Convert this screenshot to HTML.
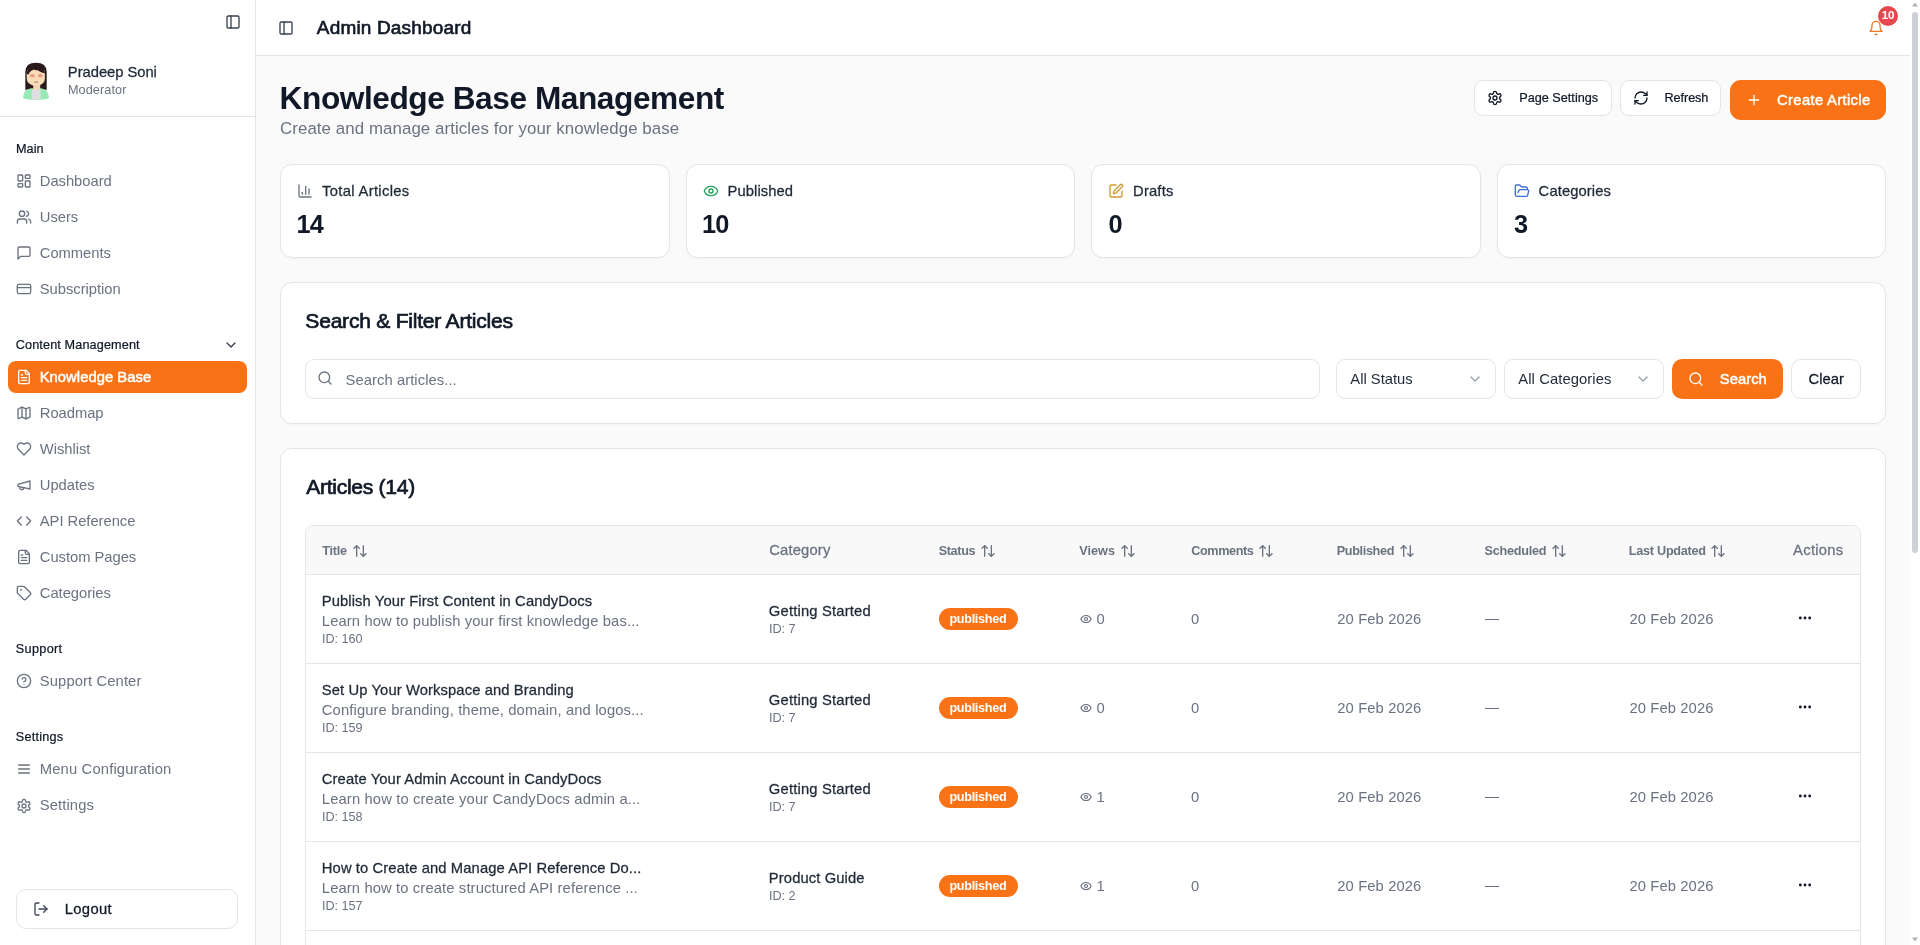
<!DOCTYPE html>
<html><head><meta charset="utf-8"><title>Admin Dashboard</title>
<style>
html,body{margin:0;padding:0;width:1920px;height:945px;overflow:hidden;background:#fafafa;font-family:"Liberation Sans", sans-serif;}
</style></head><body><div style="position:absolute;left:0;top:0;width:1920px;height:945px;will-change:transform">
<div style="position:absolute;left:0px;top:0px;width:1920px;height:945px;background:#fafafa"></div>
<div style="position:absolute;left:0px;top:0px;width:255px;height:945px;background:#ffffff"></div>
<div style="position:absolute;left:255px;top:0px;width:1px;height:945px;background:#e5e5e6"></div>
<div style="position:absolute;left:256px;top:0px;width:1654px;height:55px;background:#ffffff"></div>
<div style="position:absolute;left:256px;top:55px;width:1654px;height:1px;background:#e5e5e6"></div>
<div style="position:absolute;left:1910px;top:0px;width:10px;height:945px;background:#ffffff"></div>
<div style="position:absolute;left:1912px;top:12px;width:6px;height:541px;background:#cdd1d6;border-radius:3px"></div>
<svg style="position:absolute;left:1911px;top:1px" width="8" height="6" viewBox="0 0 8 6"><path d="M1 5.5 L4 1.5 L7 5.5Z" fill="#b0b4b9"/></svg>
<svg style="position:absolute;left:1911px;top:937px" width="8" height="6" viewBox="0 0 8 6"><path d="M1 0.5 L4 4.5 L7 0.5Z" fill="#b0b4b9"/></svg>
<svg style="position:absolute;left:225px;top:14px;" width="16" height="16" viewBox="0 0 24 24" fill="none" stroke="#374151" stroke-width="2" stroke-linecap="round" stroke-linejoin="round"><rect width="18" height="18" x="3" y="3" rx="2"/><path d="M9 3v18"/></svg>
<svg style="position:absolute;left:16px;top:58px" width="40" height="44" viewBox="0 0 40 44">
<path d="M9.3 14 Q9.3 4.7 20 4.7 Q30.7 4.7 30.7 14 L30.7 31.8 L9.3 31.8 Z" fill="#2a1a1c"/>
<path d="M7.2 39.5 Q7.5 31.2 15 30.3 L25 30.3 Q32.5 31.2 32.8 39.5 Q32 41.6 24 41.8 L16 41.8 Q8 41.6 7.2 39.5 Z" fill="#98e9b6"/>
<rect x="17.2" y="25" width="7" height="7.5" fill="#f6d5b2"/>
<path d="M15.8 31.8 L24.7 31.8 L24.7 41.4 L15.8 41.4 Z" fill="#dedfe1"/>
<path d="M10.7 15 Q10.7 11.6 14 11.6 L26 11.6 Q28.9 11.6 28.9 15 L28.9 20.5 Q28.9 25.5 23 27.5 L17 27.5 Q10.7 25.5 10.7 20.5 Z" fill="#fbdcb8"/>
<path d="M10.5 16 Q11 9.5 17.5 9.5 L17.2 12 Q14 12.5 12.5 16.5 Z" fill="#2a1a1c"/>
<path d="M17.6 11.5 Q20 9 22 9.2 Q28.5 9.5 29.2 15.5 Q25 14.5 21.5 12.2 Q19 12.5 17.6 11.5 Z" fill="#2a1a1c"/>
<ellipse cx="16.3" cy="17.8" rx="2.6" ry="1.7" fill="#e59d8d"/>
<ellipse cx="24.2" cy="17.8" rx="2.6" ry="1.7" fill="#e59d8d"/>
<rect x="18.2" y="23.6" width="3.7" height="1.1" fill="#a98568"/>
</svg>
<div style="position:absolute;left:0px;top:116px;width:255px;height:1px;background:#e5e5e6"></div>
<svg style="position:absolute;left:16px;top:173.0px;" width="16" height="16" viewBox="0 0 24 24" fill="none" stroke="#6b7280" stroke-width="2" stroke-linecap="round" stroke-linejoin="round"><rect width="7" height="9" x="3" y="3" rx="1"/><rect width="7" height="5" x="14" y="3" rx="1"/><rect width="7" height="9" x="14" y="12" rx="1"/><rect width="7" height="5" x="3" y="16" rx="1"/></svg>
<svg style="position:absolute;left:16px;top:209.0px;" width="16" height="16" viewBox="0 0 24 24" fill="none" stroke="#6b7280" stroke-width="2" stroke-linecap="round" stroke-linejoin="round"><path d="M16 21v-2a4 4 0 0 0-4-4H6a4 4 0 0 0-4 4v2"/><circle cx="9" cy="7" r="4"/><path d="M22 21v-2a4 4 0 0 0-3-3.87"/><path d="M16 3.13a4 4 0 0 1 0 7.75"/></svg>
<svg style="position:absolute;left:16px;top:245.0px;" width="16" height="16" viewBox="0 0 24 24" fill="none" stroke="#6b7280" stroke-width="2" stroke-linecap="round" stroke-linejoin="round"><path d="M21 15a2 2 0 0 1-2 2H7l-4 4V5a2 2 0 0 1 2-2h14a2 2 0 0 1 2 2z"/></svg>
<svg style="position:absolute;left:16px;top:281.0px;" width="16" height="16" viewBox="0 0 24 24" fill="none" stroke="#6b7280" stroke-width="2" stroke-linecap="round" stroke-linejoin="round"><rect width="20" height="14" x="2" y="5" rx="2"/><line x1="2" x2="22" y1="10" y2="10"/></svg>
<svg style="position:absolute;left:223px;top:337px;" width="16" height="16" viewBox="0 0 24 24" fill="none" stroke="#374151" stroke-width="2" stroke-linecap="round" stroke-linejoin="round"><path d="m6 9 6 6 6-6"/></svg>
<div style="position:absolute;left:8px;top:361px;width:239px;height:32px;background:#f97316;border-radius:8px"></div>
<svg style="position:absolute;left:16px;top:369px;" width="16" height="16" viewBox="0 0 24 24" fill="none" stroke="#ffffff" stroke-width="2" stroke-linecap="round" stroke-linejoin="round"><path d="M15 2H6a2 2 0 0 0-2 2v16a2 2 0 0 0 2 2h12a2 2 0 0 0 2-2V7Z"/><path d="M14 2v4a2 2 0 0 0 2 2h4"/><path d="M10 9H8"/><path d="M16 13H8"/><path d="M16 17H8"/></svg>
<svg style="position:absolute;left:16px;top:405.1px;" width="16" height="16" viewBox="0 0 24 24" fill="none" stroke="#6b7280" stroke-width="2" stroke-linecap="round" stroke-linejoin="round"><path d="M14.106 5.553a2 2 0 0 0 1.788 0l3.659-1.83A1 1 0 0 1 21 4.619v12.764a1 1 0 0 1-.553.894l-4.553 2.277a2 2 0 0 1-1.788 0l-4.212-2.106a2 2 0 0 0-1.788 0l-3.659 1.83A1 1 0 0 1 3 19.381V6.618a1 1 0 0 1 .553-.894l4.553-2.277a2 2 0 0 1 1.788 0z"/><path d="M15 5.764v15"/><path d="M9 3.236v15"/></svg>
<svg style="position:absolute;left:16px;top:441.1px;" width="16" height="16" viewBox="0 0 24 24" fill="none" stroke="#6b7280" stroke-width="2" stroke-linecap="round" stroke-linejoin="round"><path d="M19 14c1.49-1.46 3-3.21 3-5.5A5.5 5.5 0 0 0 16.5 3c-1.76 0-3 .5-4.5 2-1.5-1.5-2.74-2-4.5-2A5.5 5.5 0 0 0 2 8.5c0 2.3 1.5 4.05 3 5.5l7 7Z"/></svg>
<svg style="position:absolute;left:16px;top:477.1px;" width="16" height="16" viewBox="0 0 24 24" fill="none" stroke="#6b7280" stroke-width="2" stroke-linecap="round" stroke-linejoin="round"><path d="m3 11 18-5v12L3 14v-3z"/><path d="M11.6 16.8a3 3 0 1 1-5.8-1.6"/></svg>
<svg style="position:absolute;left:16px;top:513.1px;" width="16" height="16" viewBox="0 0 24 24" fill="none" stroke="#6b7280" stroke-width="2" stroke-linecap="round" stroke-linejoin="round"><polyline points="16 18 22 12 16 6"/><polyline points="8 6 2 12 8 18"/></svg>
<svg style="position:absolute;left:16px;top:549.1px;" width="16" height="16" viewBox="0 0 24 24" fill="none" stroke="#6b7280" stroke-width="2" stroke-linecap="round" stroke-linejoin="round"><path d="M15 2H6a2 2 0 0 0-2 2v16a2 2 0 0 0 2 2h12a2 2 0 0 0 2-2V7Z"/><path d="M14 2v4a2 2 0 0 0 2 2h4"/><path d="M10 9H8"/><path d="M16 13H8"/><path d="M16 17H8"/></svg>
<svg style="position:absolute;left:16px;top:585.1px;" width="16" height="16" viewBox="0 0 24 24" fill="none" stroke="#6b7280" stroke-width="2" stroke-linecap="round" stroke-linejoin="round"><path d="M12.586 2.586A2 2 0 0 0 11.172 2H4a2 2 0 0 0-2 2v7.172a2 2 0 0 0 .586 1.414l8.704 8.704a2.426 2.426 0 0 0 3.42 0l6.58-6.58a2.426 2.426 0 0 0 0-3.42z"/><circle cx="7.5" cy="7.5" r=".5" fill="currentColor"/></svg>
<svg style="position:absolute;left:16px;top:673.4px;" width="16" height="16" viewBox="0 0 24 24" fill="none" stroke="#6b7280" stroke-width="2" stroke-linecap="round" stroke-linejoin="round"><circle cx="12" cy="12" r="10"/><path d="M9.09 9a3 3 0 0 1 5.83 1c0 2-3 3-3 3"/><path d="M12 17h.01"/></svg>
<svg style="position:absolute;left:16px;top:761.4px;" width="16" height="16" viewBox="0 0 24 24" fill="none" stroke="#6b7280" stroke-width="2" stroke-linecap="round" stroke-linejoin="round"><line x1="4" x2="20" y1="12" y2="12"/><line x1="4" x2="20" y1="6" y2="6"/><line x1="4" x2="20" y1="18" y2="18"/></svg>
<svg style="position:absolute;left:16px;top:797.5px;" width="16" height="16" viewBox="0 0 24 24" fill="none" stroke="#6b7280" stroke-width="2" stroke-linecap="round" stroke-linejoin="round"><path d="M12.22 2h-.44a2 2 0 0 0-2 2v.18a2 2 0 0 1-1 1.73l-.43.25a2 2 0 0 1-2 0l-.15-.08a2 2 0 0 0-2.73.73l-.22.38a2 2 0 0 0 .73 2.73l.15.1a2 2 0 0 1 1 1.72v.51a2 2 0 0 1-1 1.74l-.15.09a2 2 0 0 0-.73 2.73l.22.38a2 2 0 0 0 2.73.73l.15-.08a2 2 0 0 1 2 0l.43.25a2 2 0 0 1 1 1.73V20a2 2 0 0 0 2 2h.44a2 2 0 0 0 2-2v-.18a2 2 0 0 1 1-1.73l.43-.25a2 2 0 0 1 2 0l.15.08a2 2 0 0 0 2.73-.73l.22-.39a2 2 0 0 0-.73-2.73l-.15-.08a2 2 0 0 1-1-1.74v-.5a2 2 0 0 1 1-1.74l.15-.09a2 2 0 0 0 .73-2.73l-.22-.38a2 2 0 0 0-2.73-.73l-.15.08a2 2 0 0 1-2 0l-.43-.25a2 2 0 0 1-1-1.73V4a2 2 0 0 0-2-2z"/><circle cx="12" cy="12" r="3"/></svg>
<div style="position:absolute;left:16px;top:889px;width:222px;height:40px;box-sizing:border-box;border:1px solid #e5e5e6;border-radius:10px;background:#fff"></div>
<svg style="position:absolute;left:33.2px;top:901px;" width="16" height="16" viewBox="0 0 24 24" fill="none" stroke="#3f4654" stroke-width="2" stroke-linecap="round" stroke-linejoin="round"><path d="M9 21H5a2 2 0 0 1-2-2V5a2 2 0 0 1 2-2h4"/><polyline points="16 17 21 12 16 7"/><line x1="21" x2="9" y1="12" y2="12"/></svg>
<svg style="position:absolute;left:278px;top:20px;" width="16" height="16" viewBox="0 0 24 24" fill="none" stroke="#374151" stroke-width="2" stroke-linecap="round" stroke-linejoin="round"><rect width="18" height="18" x="3" y="3" rx="2"/><path d="M9 3v18"/></svg>
<svg style="position:absolute;left:1868px;top:20px;" width="16" height="16" viewBox="0 0 24 24" fill="none" stroke="#ea7a2a" stroke-width="2" stroke-linecap="round" stroke-linejoin="round"><path d="M6 8a6 6 0 0 1 12 0c0 7 3 9 3 9H3s3-2 3-9"/><path d="M10.3 21a1.94 1.94 0 0 0 3.4 0"/></svg>
<div style="position:absolute;left:1878px;top:6px;width:20px;height:20px;border-radius:10px;background:#e5484d"></div>
<div style="position:absolute;left:1474px;top:80px;width:138px;height:36px;box-sizing:border-box;border:1px solid #e5e5e6;border-radius:9px;background:#fff"></div>
<svg style="position:absolute;left:1487px;top:90px;" width="16" height="16" viewBox="0 0 24 24" fill="none" stroke="#111827" stroke-width="2" stroke-linecap="round" stroke-linejoin="round"><path d="M12.22 2h-.44a2 2 0 0 0-2 2v.18a2 2 0 0 1-1 1.73l-.43.25a2 2 0 0 1-2 0l-.15-.08a2 2 0 0 0-2.73.73l-.22.38a2 2 0 0 0 .73 2.73l.15.1a2 2 0 0 1 1 1.72v.51a2 2 0 0 1-1 1.74l-.15.09a2 2 0 0 0-.73 2.73l.22.38a2 2 0 0 0 2.73.73l.15-.08a2 2 0 0 1 2 0l.43.25a2 2 0 0 1 1 1.73V20a2 2 0 0 0 2 2h.44a2 2 0 0 0 2-2v-.18a2 2 0 0 1 1-1.73l.43-.25a2 2 0 0 1 2 0l.15.08a2 2 0 0 0 2.73-.73l.22-.39a2 2 0 0 0-.73-2.73l-.15-.08a2 2 0 0 1-1-1.74v-.5a2 2 0 0 1 1-1.74l.15-.09a2 2 0 0 0 .73-2.73l-.22-.38a2 2 0 0 0-2.73-.73l-.15.08a2 2 0 0 1-2 0l-.43-.25a2 2 0 0 1-1-1.73V4a2 2 0 0 0-2-2z"/><circle cx="12" cy="12" r="3"/></svg>
<div style="position:absolute;left:1620px;top:80px;width:101px;height:36px;box-sizing:border-box;border:1px solid #e5e5e6;border-radius:9px;background:#fff"></div>
<svg style="position:absolute;left:1633px;top:90px;" width="16" height="16" viewBox="0 0 24 24" fill="none" stroke="#111827" stroke-width="2" stroke-linecap="round" stroke-linejoin="round"><path d="M3 12a9 9 0 0 1 9-9 9.75 9.75 0 0 1 6.74 2.74L21 8"/><path d="M21 3v5h-5"/><path d="M21 12a9 9 0 0 1-9 9 9.75 9.75 0 0 1-6.74-2.74L3 16"/><path d="M8 16H3v5"/></svg>
<div style="position:absolute;left:1730px;top:80px;width:156px;height:40px;background:#f97316;border-radius:11px"></div>
<svg style="position:absolute;left:1746px;top:92px;" width="16" height="16" viewBox="0 0 24 24" fill="none" stroke="#ffffff" stroke-width="2" stroke-linecap="round" stroke-linejoin="round"><path d="M5 12h14"/><path d="M12 5v14"/></svg>
<div style="position:absolute;left:280px;top:164px;width:389.5px;height:94px;box-sizing:border-box;border:1px solid #e5e5e6;border-radius:12px;background:#fff;box-shadow:0 1px 2px rgba(0,0,0,0.03)"></div>
<svg style="position:absolute;left:296.8px;top:183px;" width="16" height="16" viewBox="0 0 24 24" fill="none" stroke="#6b7280" stroke-width="2" stroke-linecap="round" stroke-linejoin="round"><path d="M3 3v16a2 2 0 0 0 2 2h16"/><path d="M18 17V9"/><path d="M13 17V5"/><path d="M8 17v-3"/></svg>
<div style="position:absolute;left:685.5px;top:164px;width:389.5px;height:94px;box-sizing:border-box;border:1px solid #e5e5e6;border-radius:12px;background:#fff;box-shadow:0 1px 2px rgba(0,0,0,0.03)"></div>
<svg style="position:absolute;left:703.3px;top:183px;" width="16" height="16" viewBox="0 0 24 24" fill="none" stroke="#22a35a" stroke-width="2" stroke-linecap="round" stroke-linejoin="round"><path d="M2.062 12.348a1 1 0 0 1 0-.696 10.75 10.75 0 0 1 19.876 0 1 1 0 0 1 0 .696 10.75 10.75 0 0 1-19.876 0"/><circle cx="12" cy="12" r="3"/></svg>
<div style="position:absolute;left:1091px;top:164px;width:389.5px;height:94px;box-sizing:border-box;border:1px solid #e5e5e6;border-radius:12px;background:#fff;box-shadow:0 1px 2px rgba(0,0,0,0.03)"></div>
<svg style="position:absolute;left:1107.8px;top:183px;" width="16" height="16" viewBox="0 0 24 24" fill="none" stroke="#d09a30" stroke-width="2" stroke-linecap="round" stroke-linejoin="round"><path d="M12 3H5a2 2 0 0 0-2 2v14a2 2 0 0 0 2 2h14a2 2 0 0 0 2-2v-7"/><path d="M18.375 2.625a1 1 0 0 1 3 3l-9.013 9.014a2 2 0 0 1-.853.505l-2.873.84a.5.5 0 0 1-.62-.62l.84-2.873a2 2 0 0 1 .506-.852z"/></svg>
<div style="position:absolute;left:1496.5px;top:164px;width:389.5px;height:94px;box-sizing:border-box;border:1px solid #e5e5e6;border-radius:12px;background:#fff;box-shadow:0 1px 2px rgba(0,0,0,0.03)"></div>
<svg style="position:absolute;left:1514.3px;top:183px;" width="16" height="16" viewBox="0 0 24 24" fill="none" stroke="#3d6fdc" stroke-width="2" stroke-linecap="round" stroke-linejoin="round"><path d="m6 14 1.5-2.9A2 2 0 0 1 9.24 10H20a2 2 0 0 1 1.94 2.5l-1.54 6a2 2 0 0 1-1.95 1.5H4a2 2 0 0 1-2-2V5a2 2 0 0 1 2-2h3.9a2 2 0 0 1 1.69.9l.81 1.2a2 2 0 0 0 1.67.9H18a2 2 0 0 1 2 2v2"/></svg>
<div style="position:absolute;left:280px;top:282px;width:1606px;height:142px;box-sizing:border-box;border:1px solid #e5e5e6;border-radius:12px;background:#fff;box-shadow:0 1px 2px rgba(0,0,0,0.03)"></div>
<div style="position:absolute;left:305px;top:359px;width:1015px;height:40px;box-sizing:border-box;border:1px solid #e5e5e6;border-radius:9px;background:#fff"></div>
<svg style="position:absolute;left:316.5px;top:370.4px;" width="16" height="16" viewBox="0 0 24 24" fill="none" stroke="#6b7280" stroke-width="2" stroke-linecap="round" stroke-linejoin="round"><circle cx="11" cy="11" r="8"/><path d="m21 21-4.3-4.3"/></svg>
<div style="position:absolute;left:1336px;top:359px;width:160px;height:40px;box-sizing:border-box;border:1px solid #e5e5e6;border-radius:9px;background:#fff"></div>
<svg style="position:absolute;left:1467px;top:371px;" width="16" height="16" viewBox="0 0 24 24" fill="none" stroke="#9ca3af" stroke-width="2" stroke-linecap="round" stroke-linejoin="round"><path d="m6 9 6 6 6-6"/></svg>
<div style="position:absolute;left:1504px;top:359px;width:160px;height:40px;box-sizing:border-box;border:1px solid #e5e5e6;border-radius:9px;background:#fff"></div>
<svg style="position:absolute;left:1635px;top:371px;" width="16" height="16" viewBox="0 0 24 24" fill="none" stroke="#9ca3af" stroke-width="2" stroke-linecap="round" stroke-linejoin="round"><path d="m6 9 6 6 6-6"/></svg>
<div style="position:absolute;left:1672px;top:359px;width:111px;height:40px;background:#f97316;border-radius:10px"></div>
<svg style="position:absolute;left:1688px;top:370.8px;" width="16" height="16" viewBox="0 0 24 24" fill="none" stroke="#ffffff" stroke-width="2" stroke-linecap="round" stroke-linejoin="round"><circle cx="11" cy="11" r="8"/><path d="m21 21-4.3-4.3"/></svg>
<div style="position:absolute;left:1791px;top:359px;width:70px;height:40px;box-sizing:border-box;border:1px solid #e5e5e6;border-radius:10px;background:#fff"></div>
<div style="position:absolute;left:280px;top:448px;width:1606px;height:600px;box-sizing:border-box;border:1px solid #e5e5e6;border-radius:12px;background:#fff"></div>
<div style="position:absolute;left:305px;top:525px;width:1556px;height:600px;box-sizing:border-box;border:1px solid #e5e5e6;border-radius:8px;background:#fff;overflow:hidden"></div>
<div style="position:absolute;left:306px;top:526px;width:1554px;height:48px;background:#f9f9fa;border-radius:7px 7px 0 0"></div>
<div style="position:absolute;left:306px;top:574px;width:1554px;height:1px;background:#e5e5e6"></div>
<svg style="position:absolute;left:352.4px;top:543.4px;" width="16" height="16" viewBox="0 0 24 24" fill="none" stroke="#6b7280" stroke-width="2" stroke-linecap="round" stroke-linejoin="round"><path d="m21 16-4 4-4-4"/><path d="M17 20V4"/><path d="m3 8 4-4 4 4"/><path d="M7 4v16"/></svg>
<svg style="position:absolute;left:980px;top:543.4px;" width="16" height="16" viewBox="0 0 24 24" fill="none" stroke="#6b7280" stroke-width="2" stroke-linecap="round" stroke-linejoin="round"><path d="m21 16-4 4-4-4"/><path d="M17 20V4"/><path d="m3 8 4-4 4 4"/><path d="M7 4v16"/></svg>
<svg style="position:absolute;left:1120.2px;top:543.4px;" width="16" height="16" viewBox="0 0 24 24" fill="none" stroke="#6b7280" stroke-width="2" stroke-linecap="round" stroke-linejoin="round"><path d="m21 16-4 4-4-4"/><path d="M17 20V4"/><path d="m3 8 4-4 4 4"/><path d="M7 4v16"/></svg>
<svg style="position:absolute;left:1258px;top:543.4px;" width="16" height="16" viewBox="0 0 24 24" fill="none" stroke="#6b7280" stroke-width="2" stroke-linecap="round" stroke-linejoin="round"><path d="m21 16-4 4-4-4"/><path d="M17 20V4"/><path d="m3 8 4-4 4 4"/><path d="M7 4v16"/></svg>
<svg style="position:absolute;left:1399px;top:543.4px;" width="16" height="16" viewBox="0 0 24 24" fill="none" stroke="#6b7280" stroke-width="2" stroke-linecap="round" stroke-linejoin="round"><path d="m21 16-4 4-4-4"/><path d="M17 20V4"/><path d="m3 8 4-4 4 4"/><path d="M7 4v16"/></svg>
<svg style="position:absolute;left:1551px;top:543.4px;" width="16" height="16" viewBox="0 0 24 24" fill="none" stroke="#6b7280" stroke-width="2" stroke-linecap="round" stroke-linejoin="round"><path d="m21 16-4 4-4-4"/><path d="M17 20V4"/><path d="m3 8 4-4 4 4"/><path d="M7 4v16"/></svg>
<svg style="position:absolute;left:1710px;top:543.4px;" width="16" height="16" viewBox="0 0 24 24" fill="none" stroke="#6b7280" stroke-width="2" stroke-linecap="round" stroke-linejoin="round"><path d="m21 16-4 4-4-4"/><path d="M17 20V4"/><path d="m3 8 4-4 4 4"/><path d="M7 4v16"/></svg>
<div style="position:absolute;left:306px;top:663px;width:1554px;height:1px;background:#e5e5e6"></div>
<div style="position:absolute;left:939px;top:608px;width:79px;height:22px;background:#f97316;border-radius:11px"></div>
<svg style="position:absolute;left:1080px;top:613px;" width="12" height="12" viewBox="0 0 24 24" fill="none" stroke="#6b7280" stroke-width="2.4" stroke-linecap="round" stroke-linejoin="round"><path d="M2.062 12.348a1 1 0 0 1 0-.696 10.75 10.75 0 0 1 19.876 0 1 1 0 0 1 0 .696 10.75 10.75 0 0 1-19.876 0"/><circle cx="12" cy="12" r="3"/></svg>
<div style="position:absolute;left:1485px;top:619px;width:14px;height:1.2px;background:#6b7280"></div>
<svg style="position:absolute;left:1797px;top:610px;" width="16" height="16" viewBox="0 0 24 24" fill="none" stroke="#111827" stroke-width="2" stroke-linecap="round" stroke-linejoin="round"><circle cx="12" cy="12" r="1.15"/><circle cx="19" cy="12" r="1.15"/><circle cx="5" cy="12" r="1.15"/></svg>
<div style="position:absolute;left:306px;top:752px;width:1554px;height:1px;background:#e5e5e6"></div>
<div style="position:absolute;left:939px;top:697px;width:79px;height:22px;background:#f97316;border-radius:11px"></div>
<svg style="position:absolute;left:1080px;top:702px;" width="12" height="12" viewBox="0 0 24 24" fill="none" stroke="#6b7280" stroke-width="2.4" stroke-linecap="round" stroke-linejoin="round"><path d="M2.062 12.348a1 1 0 0 1 0-.696 10.75 10.75 0 0 1 19.876 0 1 1 0 0 1 0 .696 10.75 10.75 0 0 1-19.876 0"/><circle cx="12" cy="12" r="3"/></svg>
<div style="position:absolute;left:1485px;top:708px;width:14px;height:1.2px;background:#6b7280"></div>
<svg style="position:absolute;left:1797px;top:699px;" width="16" height="16" viewBox="0 0 24 24" fill="none" stroke="#111827" stroke-width="2" stroke-linecap="round" stroke-linejoin="round"><circle cx="12" cy="12" r="1.15"/><circle cx="19" cy="12" r="1.15"/><circle cx="5" cy="12" r="1.15"/></svg>
<div style="position:absolute;left:306px;top:841px;width:1554px;height:1px;background:#e5e5e6"></div>
<div style="position:absolute;left:939px;top:786px;width:79px;height:22px;background:#f97316;border-radius:11px"></div>
<svg style="position:absolute;left:1080px;top:791px;" width="12" height="12" viewBox="0 0 24 24" fill="none" stroke="#6b7280" stroke-width="2.4" stroke-linecap="round" stroke-linejoin="round"><path d="M2.062 12.348a1 1 0 0 1 0-.696 10.75 10.75 0 0 1 19.876 0 1 1 0 0 1 0 .696 10.75 10.75 0 0 1-19.876 0"/><circle cx="12" cy="12" r="3"/></svg>
<div style="position:absolute;left:1485px;top:797px;width:14px;height:1.2px;background:#6b7280"></div>
<svg style="position:absolute;left:1797px;top:788px;" width="16" height="16" viewBox="0 0 24 24" fill="none" stroke="#111827" stroke-width="2" stroke-linecap="round" stroke-linejoin="round"><circle cx="12" cy="12" r="1.15"/><circle cx="19" cy="12" r="1.15"/><circle cx="5" cy="12" r="1.15"/></svg>
<div style="position:absolute;left:306px;top:930px;width:1554px;height:1px;background:#e5e5e6"></div>
<div style="position:absolute;left:939px;top:875px;width:79px;height:22px;background:#f97316;border-radius:11px"></div>
<svg style="position:absolute;left:1080px;top:880px;" width="12" height="12" viewBox="0 0 24 24" fill="none" stroke="#6b7280" stroke-width="2.4" stroke-linecap="round" stroke-linejoin="round"><path d="M2.062 12.348a1 1 0 0 1 0-.696 10.75 10.75 0 0 1 19.876 0 1 1 0 0 1 0 .696 10.75 10.75 0 0 1-19.876 0"/><circle cx="12" cy="12" r="3"/></svg>
<div style="position:absolute;left:1485px;top:886px;width:14px;height:1.2px;background:#6b7280"></div>
<svg style="position:absolute;left:1797px;top:877px;" width="16" height="16" viewBox="0 0 24 24" fill="none" stroke="#111827" stroke-width="2" stroke-linecap="round" stroke-linejoin="round"><circle cx="12" cy="12" r="1.15"/><circle cx="19" cy="12" r="1.15"/><circle cx="5" cy="12" r="1.15"/></svg>
<div style="position:absolute;left:67.86px;top:64.43px;font-size:14.77px;line-height:16.50px;font-weight:400;color:#1f2937;letter-spacing:-0.041px;white-space:pre;-webkit-text-stroke:0.27px #1f2937;">Pradeep Soni</div>
<div style="position:absolute;left:67.99px;top:83.29px;font-size:12.66px;line-height:14.14px;font-weight:400;color:#6b7280;letter-spacing:0.087px;white-space:pre;">Moderator</div>
<div style="position:absolute;left:15.94px;top:142.44px;font-size:12.66px;line-height:14.14px;font-weight:400;color:#111827;letter-spacing:0.083px;white-space:pre;-webkit-text-stroke:0.23px #111827;">Main</div>
<div style="position:absolute;left:39.81px;top:173.13px;font-size:14.77px;line-height:16.50px;font-weight:400;color:#6b7280;letter-spacing:-0.038px;white-space:pre;">Dashboard</div>
<div style="position:absolute;left:39.81px;top:209.13px;font-size:14.77px;line-height:16.50px;font-weight:400;color:#6b7280;letter-spacing:-0.037px;white-space:pre;">Users</div>
<div style="position:absolute;left:39.81px;top:245.13px;font-size:14.77px;line-height:16.50px;font-weight:400;color:#6b7280;letter-spacing:-0.042px;white-space:pre;">Comments</div>
<div style="position:absolute;left:39.81px;top:281.13px;font-size:14.77px;line-height:16.50px;font-weight:400;color:#6b7280;letter-spacing:-0.032px;white-space:pre;">Subscription</div>
<div style="position:absolute;left:15.74px;top:337.84px;font-size:12.66px;line-height:14.14px;font-weight:400;color:#111827;letter-spacing:0.127px;white-space:pre;-webkit-text-stroke:0.23px #111827;">Content Management</div>
<div style="position:absolute;left:39.71px;top:369.23px;font-size:14.77px;line-height:16.50px;font-weight:400;color:#ffffff;letter-spacing:0.047px;white-space:pre;-webkit-text-stroke:0.49px #ffffff;">Knowledge Base</div>
<div style="position:absolute;left:39.81px;top:405.23px;font-size:14.77px;line-height:16.50px;font-weight:400;color:#6b7280;letter-spacing:-0.043px;white-space:pre;">Roadmap</div>
<div style="position:absolute;left:39.81px;top:441.23px;font-size:14.77px;line-height:16.50px;font-weight:400;color:#6b7280;letter-spacing:-0.030px;white-space:pre;">Wishlist</div>
<div style="position:absolute;left:39.81px;top:477.23px;font-size:14.77px;line-height:16.50px;font-weight:400;color:#6b7280;letter-spacing:-0.037px;white-space:pre;">Updates</div>
<div style="position:absolute;left:39.81px;top:513.23px;font-size:14.77px;line-height:16.50px;font-weight:400;color:#6b7280;letter-spacing:-0.035px;white-space:pre;">API Reference</div>
<div style="position:absolute;left:39.81px;top:549.23px;font-size:14.77px;line-height:16.50px;font-weight:400;color:#6b7280;letter-spacing:-0.038px;white-space:pre;">Custom Pages</div>
<div style="position:absolute;left:39.81px;top:585.23px;font-size:14.77px;line-height:16.50px;font-weight:400;color:#6b7280;letter-spacing:-0.034px;white-space:pre;">Categories</div>
<div style="position:absolute;left:15.74px;top:641.74px;font-size:12.66px;line-height:14.14px;font-weight:400;color:#111827;letter-spacing:0.343px;white-space:pre;-webkit-text-stroke:0.23px #111827;">Support</div>
<div style="position:absolute;left:39.81px;top:672.73px;font-size:14.77px;line-height:16.50px;font-weight:400;color:#6b7280;letter-spacing:0.107px;white-space:pre;">Support Center</div>
<div style="position:absolute;left:15.74px;top:729.74px;font-size:12.66px;line-height:14.14px;font-weight:400;color:#111827;letter-spacing:0.236px;white-space:pre;-webkit-text-stroke:0.23px #111827;">Settings</div>
<div style="position:absolute;left:39.81px;top:760.73px;font-size:14.77px;line-height:16.50px;font-weight:400;color:#6b7280;letter-spacing:0.156px;white-space:pre;">Menu Configuration</div>
<div style="position:absolute;left:39.81px;top:796.83px;font-size:14.77px;line-height:16.50px;font-weight:400;color:#6b7280;letter-spacing:0.096px;white-space:pre;">Settings</div>
<div style="position:absolute;left:64.71px;top:901.43px;font-size:14.77px;line-height:16.50px;font-weight:400;color:#111827;letter-spacing:0.372px;white-space:pre;-webkit-text-stroke:0.27px #111827;">Logout</div>
<div style="position:absolute;left:316.86px;top:16.91px;font-size:18.99px;line-height:21.21px;font-weight:400;color:#111827;letter-spacing:0.169px;white-space:pre;-webkit-text-stroke:0.63px #111827;">Admin Dashboard</div>
<div style="position:absolute;left:1881.80px;top:9.10px;font-size:11.60px;line-height:12.96px;font-weight:700;color:#ffffff;letter-spacing:-0.294px;white-space:pre;">10</div>
<div style="position:absolute;left:279.60px;top:80.86px;font-size:31.65px;line-height:35.35px;font-weight:700;color:#111827;letter-spacing:-0.444px;white-space:pre;">Knowledge Base Management</div>
<div style="position:absolute;left:279.99px;top:119.72px;font-size:16.88px;line-height:18.85px;font-weight:400;color:#6b7280;letter-spacing:0.075px;white-space:pre;">Create and manage articles for your knowledge base</div>
<div style="position:absolute;left:1519.24px;top:91.34px;font-size:12.66px;line-height:14.14px;font-weight:400;color:#111827;letter-spacing:0.006px;white-space:pre;-webkit-text-stroke:0.23px #111827;">Page Settings</div>
<div style="position:absolute;left:1664.54px;top:91.34px;font-size:12.66px;line-height:14.14px;font-weight:400;color:#111827;letter-spacing:-0.074px;white-space:pre;-webkit-text-stroke:0.23px #111827;">Refresh</div>
<div style="position:absolute;left:1777.11px;top:92.23px;font-size:14.77px;line-height:16.50px;font-weight:400;color:#ffffff;letter-spacing:0.338px;white-space:pre;-webkit-text-stroke:0.49px #ffffff;">Create Article</div>
<div style="position:absolute;left:322.11px;top:182.83px;font-size:14.77px;line-height:16.50px;font-weight:400;color:#1f2937;letter-spacing:0.319px;white-space:pre;-webkit-text-stroke:0.27px #1f2937;">Total Articles</div>
<div style="position:absolute;left:296.48px;top:209.79px;font-size:25.32px;line-height:28.28px;font-weight:700;color:#111827;letter-spacing:-0.734px;white-space:pre;">14</div>
<div style="position:absolute;left:727.61px;top:182.83px;font-size:14.77px;line-height:16.50px;font-weight:400;color:#1f2937;letter-spacing:0.059px;white-space:pre;-webkit-text-stroke:0.27px #1f2937;">Published</div>
<div style="position:absolute;left:701.98px;top:209.79px;font-size:25.32px;line-height:28.28px;font-weight:700;color:#111827;letter-spacing:-0.734px;white-space:pre;">10</div>
<div style="position:absolute;left:1133.11px;top:182.83px;font-size:14.77px;line-height:16.50px;font-weight:400;color:#1f2937;letter-spacing:0.156px;white-space:pre;-webkit-text-stroke:0.27px #1f2937;">Drafts</div>
<div style="position:absolute;left:1108.48px;top:209.79px;font-size:25.32px;line-height:28.28px;font-weight:700;color:#111827;letter-spacing:-0.734px;white-space:pre;">0</div>
<div style="position:absolute;left:1538.61px;top:182.83px;font-size:14.77px;line-height:16.50px;font-weight:400;color:#1f2937;letter-spacing:0.103px;white-space:pre;-webkit-text-stroke:0.27px #1f2937;">Categories</div>
<div style="position:absolute;left:1513.98px;top:209.79px;font-size:25.32px;line-height:28.28px;font-weight:700;color:#111827;letter-spacing:-0.734px;white-space:pre;">3</div>
<div style="position:absolute;left:305.33px;top:308.80px;font-size:21.10px;line-height:23.57px;font-weight:400;color:#111827;letter-spacing:-0.247px;white-space:pre;-webkit-text-stroke:0.70px #111827;">Search &amp; Filter Articles</div>
<div style="position:absolute;left:345.61px;top:371.83px;font-size:14.77px;line-height:16.50px;font-weight:400;color:#6b7280;letter-spacing:0.063px;white-space:pre;">Search articles...</div>
<div style="position:absolute;left:1350.31px;top:371.38px;font-size:14.77px;line-height:16.50px;font-weight:400;color:#1f2937;letter-spacing:-0.005px;white-space:pre;">All Status</div>
<div style="position:absolute;left:1518.31px;top:371.38px;font-size:14.77px;line-height:16.50px;font-weight:400;color:#1f2937;letter-spacing:0.086px;white-space:pre;">All Categories</div>
<div style="position:absolute;left:1719.81px;top:370.83px;font-size:14.77px;line-height:16.50px;font-weight:400;color:#ffffff;letter-spacing:0.047px;white-space:pre;-webkit-text-stroke:0.49px #ffffff;">Search</div>
<div style="position:absolute;left:1808.61px;top:370.83px;font-size:14.77px;line-height:16.50px;font-weight:400;color:#111827;letter-spacing:0.009px;white-space:pre;-webkit-text-stroke:0.27px #111827;">Clear</div>
<div style="position:absolute;left:306.23px;top:474.90px;font-size:21.10px;line-height:23.57px;font-weight:400;color:#111827;letter-spacing:-0.296px;white-space:pre;-webkit-text-stroke:0.70px #111827;">Articles (14)</div>
<div style="position:absolute;left:322.24px;top:543.74px;font-size:12.66px;line-height:14.14px;font-weight:700;color:#6b7280;letter-spacing:-0.228px;white-space:pre;">Title</div>
<div style="position:absolute;left:938.64px;top:543.74px;font-size:12.66px;line-height:14.14px;font-weight:700;color:#6b7280;letter-spacing:-0.340px;white-space:pre;">Status</div>
<div style="position:absolute;left:1079.24px;top:543.74px;font-size:12.66px;line-height:14.14px;font-weight:700;color:#6b7280;letter-spacing:0.032px;white-space:pre;">Views</div>
<div style="position:absolute;left:1191.14px;top:543.74px;font-size:12.66px;line-height:14.14px;font-weight:700;color:#6b7280;letter-spacing:-0.374px;white-space:pre;">Comments</div>
<div style="position:absolute;left:1336.74px;top:543.74px;font-size:12.66px;line-height:14.14px;font-weight:700;color:#6b7280;letter-spacing:-0.350px;white-space:pre;">Published</div>
<div style="position:absolute;left:1484.44px;top:543.74px;font-size:12.66px;line-height:14.14px;font-weight:700;color:#6b7280;letter-spacing:-0.239px;white-space:pre;">Scheduled</div>
<div style="position:absolute;left:1628.84px;top:543.74px;font-size:12.66px;line-height:14.14px;font-weight:700;color:#6b7280;letter-spacing:-0.271px;white-space:pre;">Last Updated</div>
<div style="position:absolute;left:769.31px;top:541.53px;font-size:14.77px;line-height:16.50px;font-weight:400;color:#6b7280;letter-spacing:0.159px;white-space:pre;-webkit-text-stroke:0.27px #6b7280;">Category</div>
<div style="position:absolute;left:1793.11px;top:541.83px;font-size:14.77px;line-height:16.50px;font-weight:400;color:#6b7280;letter-spacing:0.269px;white-space:pre;-webkit-text-stroke:0.27px #6b7280;">Actions</div>
<div style="position:absolute;left:321.81px;top:593.33px;font-size:14.77px;line-height:16.50px;font-weight:400;color:#1f2937;letter-spacing:0.097px;white-space:pre;-webkit-text-stroke:0.27px #1f2937;">Publish Your First Content in CandyDocs</div>
<div style="position:absolute;left:321.81px;top:613.23px;font-size:14.77px;line-height:16.50px;font-weight:400;color:#6b7280;letter-spacing:0.123px;white-space:pre;">Learn how to publish your first knowledge bas...</div>
<div style="position:absolute;left:321.94px;top:632.14px;font-size:12.66px;line-height:14.14px;font-weight:400;color:#6b7280;letter-spacing:-0.028px;white-space:pre;">ID: 160</div>
<div style="position:absolute;left:768.86px;top:603.13px;font-size:14.77px;line-height:16.50px;font-weight:400;color:#1f2937;letter-spacing:0.179px;white-space:pre;-webkit-text-stroke:0.27px #1f2937;">Getting Started</div>
<div style="position:absolute;left:768.99px;top:622.29px;font-size:12.66px;line-height:14.14px;font-weight:400;color:#6b7280;letter-spacing:-0.025px;white-space:pre;">ID: 7</div>
<div style="position:absolute;left:949.44px;top:612.04px;font-size:12.66px;line-height:14.14px;font-weight:700;color:#ffffff;letter-spacing:-0.322px;white-space:pre;">published</div>
<div style="position:absolute;left:1096.41px;top:610.83px;font-size:14.77px;line-height:16.50px;font-weight:400;color:#6b7280;letter-spacing:-0.039px;white-space:pre;">0</div>
<div style="position:absolute;left:1191.01px;top:610.83px;font-size:14.77px;line-height:16.50px;font-weight:400;color:#6b7280;letter-spacing:-0.039px;white-space:pre;">0</div>
<div style="position:absolute;left:1337.31px;top:610.83px;font-size:14.77px;line-height:16.50px;font-weight:400;color:#6b7280;letter-spacing:0.111px;white-space:pre;">20 Feb 2026</div>
<div style="position:absolute;left:1629.41px;top:610.83px;font-size:14.77px;line-height:16.50px;font-weight:400;color:#6b7280;letter-spacing:0.111px;white-space:pre;">20 Feb 2026</div>
<div style="position:absolute;left:321.81px;top:682.33px;font-size:14.77px;line-height:16.50px;font-weight:400;color:#1f2937;letter-spacing:0.104px;white-space:pre;-webkit-text-stroke:0.27px #1f2937;">Set Up Your Workspace and Branding</div>
<div style="position:absolute;left:321.81px;top:702.23px;font-size:14.77px;line-height:16.50px;font-weight:400;color:#6b7280;letter-spacing:0.127px;white-space:pre;">Configure branding, theme, domain, and logos...</div>
<div style="position:absolute;left:321.94px;top:721.14px;font-size:12.66px;line-height:14.14px;font-weight:400;color:#6b7280;letter-spacing:-0.028px;white-space:pre;">ID: 159</div>
<div style="position:absolute;left:768.86px;top:692.13px;font-size:14.77px;line-height:16.50px;font-weight:400;color:#1f2937;letter-spacing:0.179px;white-space:pre;-webkit-text-stroke:0.27px #1f2937;">Getting Started</div>
<div style="position:absolute;left:768.99px;top:711.29px;font-size:12.66px;line-height:14.14px;font-weight:400;color:#6b7280;letter-spacing:-0.025px;white-space:pre;">ID: 7</div>
<div style="position:absolute;left:949.44px;top:701.04px;font-size:12.66px;line-height:14.14px;font-weight:700;color:#ffffff;letter-spacing:-0.322px;white-space:pre;">published</div>
<div style="position:absolute;left:1096.41px;top:699.83px;font-size:14.77px;line-height:16.50px;font-weight:400;color:#6b7280;letter-spacing:-0.039px;white-space:pre;">0</div>
<div style="position:absolute;left:1191.01px;top:699.83px;font-size:14.77px;line-height:16.50px;font-weight:400;color:#6b7280;letter-spacing:-0.039px;white-space:pre;">0</div>
<div style="position:absolute;left:1337.31px;top:699.83px;font-size:14.77px;line-height:16.50px;font-weight:400;color:#6b7280;letter-spacing:0.111px;white-space:pre;">20 Feb 2026</div>
<div style="position:absolute;left:1629.41px;top:699.83px;font-size:14.77px;line-height:16.50px;font-weight:400;color:#6b7280;letter-spacing:0.111px;white-space:pre;">20 Feb 2026</div>
<div style="position:absolute;left:321.81px;top:771.33px;font-size:14.77px;line-height:16.50px;font-weight:400;color:#1f2937;letter-spacing:0.103px;white-space:pre;-webkit-text-stroke:0.27px #1f2937;">Create Your Admin Account in CandyDocs</div>
<div style="position:absolute;left:321.81px;top:791.23px;font-size:14.77px;line-height:16.50px;font-weight:400;color:#6b7280;letter-spacing:0.132px;white-space:pre;">Learn how to create your CandyDocs admin a...</div>
<div style="position:absolute;left:321.94px;top:810.14px;font-size:12.66px;line-height:14.14px;font-weight:400;color:#6b7280;letter-spacing:-0.028px;white-space:pre;">ID: 158</div>
<div style="position:absolute;left:768.86px;top:781.13px;font-size:14.77px;line-height:16.50px;font-weight:400;color:#1f2937;letter-spacing:0.179px;white-space:pre;-webkit-text-stroke:0.27px #1f2937;">Getting Started</div>
<div style="position:absolute;left:768.99px;top:800.29px;font-size:12.66px;line-height:14.14px;font-weight:400;color:#6b7280;letter-spacing:-0.025px;white-space:pre;">ID: 7</div>
<div style="position:absolute;left:949.44px;top:790.04px;font-size:12.66px;line-height:14.14px;font-weight:700;color:#ffffff;letter-spacing:-0.322px;white-space:pre;">published</div>
<div style="position:absolute;left:1096.41px;top:788.83px;font-size:14.77px;line-height:16.50px;font-weight:400;color:#6b7280;letter-spacing:-0.039px;white-space:pre;">1</div>
<div style="position:absolute;left:1191.01px;top:788.83px;font-size:14.77px;line-height:16.50px;font-weight:400;color:#6b7280;letter-spacing:-0.039px;white-space:pre;">0</div>
<div style="position:absolute;left:1337.31px;top:788.83px;font-size:14.77px;line-height:16.50px;font-weight:400;color:#6b7280;letter-spacing:0.111px;white-space:pre;">20 Feb 2026</div>
<div style="position:absolute;left:1629.41px;top:788.83px;font-size:14.77px;line-height:16.50px;font-weight:400;color:#6b7280;letter-spacing:0.111px;white-space:pre;">20 Feb 2026</div>
<div style="position:absolute;left:321.81px;top:860.33px;font-size:14.77px;line-height:16.50px;font-weight:400;color:#1f2937;letter-spacing:0.102px;white-space:pre;-webkit-text-stroke:0.27px #1f2937;">How to Create and Manage API Reference Do...</div>
<div style="position:absolute;left:321.81px;top:880.23px;font-size:14.77px;line-height:16.50px;font-weight:400;color:#6b7280;letter-spacing:0.123px;white-space:pre;">Learn how to create structured API reference ...</div>
<div style="position:absolute;left:321.94px;top:899.14px;font-size:12.66px;line-height:14.14px;font-weight:400;color:#6b7280;letter-spacing:-0.028px;white-space:pre;">ID: 157</div>
<div style="position:absolute;left:768.86px;top:870.13px;font-size:14.77px;line-height:16.50px;font-weight:400;color:#1f2937;letter-spacing:0.103px;white-space:pre;-webkit-text-stroke:0.27px #1f2937;">Product Guide</div>
<div style="position:absolute;left:768.99px;top:889.29px;font-size:12.66px;line-height:14.14px;font-weight:400;color:#6b7280;letter-spacing:-0.025px;white-space:pre;">ID: 2</div>
<div style="position:absolute;left:949.44px;top:879.04px;font-size:12.66px;line-height:14.14px;font-weight:700;color:#ffffff;letter-spacing:-0.322px;white-space:pre;">published</div>
<div style="position:absolute;left:1096.41px;top:877.83px;font-size:14.77px;line-height:16.50px;font-weight:400;color:#6b7280;letter-spacing:-0.039px;white-space:pre;">1</div>
<div style="position:absolute;left:1191.01px;top:877.83px;font-size:14.77px;line-height:16.50px;font-weight:400;color:#6b7280;letter-spacing:-0.039px;white-space:pre;">0</div>
<div style="position:absolute;left:1337.31px;top:877.83px;font-size:14.77px;line-height:16.50px;font-weight:400;color:#6b7280;letter-spacing:0.111px;white-space:pre;">20 Feb 2026</div>
<div style="position:absolute;left:1629.41px;top:877.83px;font-size:14.77px;line-height:16.50px;font-weight:400;color:#6b7280;letter-spacing:0.111px;white-space:pre;">20 Feb 2026</div>
</div></body></html>
